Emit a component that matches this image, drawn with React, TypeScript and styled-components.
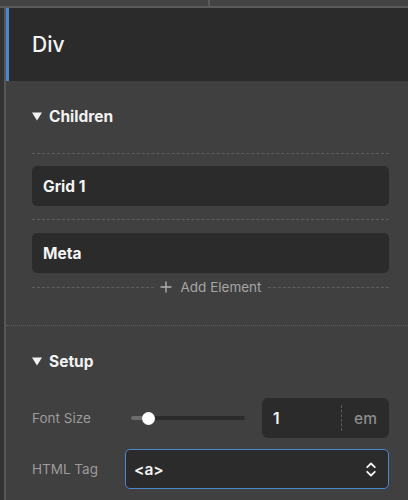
import React from "react";
import styled, { createGlobalStyle } from "styled-components";

const Global = createGlobalStyle`
  html, body { margin: 0; padding: 0; background: #404040; }
  body { font-family: Inter, "Noto Sans", "Liberation Sans", sans-serif; -webkit-font-smoothing: antialiased; }
  * { box-sizing: border-box; }
`;

const Page = styled.div`
  width: 408px;
  height: 500px;
  overflow: hidden;
  display: flex;
  flex-direction: column;
  background: #404040;
`;

const TopStrip = styled.div`
  height: 8px;
  display: grid;
  grid-template-columns: 210px 1fr;
  border-bottom: 2px solid #5a5a5a;
  background: #434343;
`;

const TopCell = styled.div<{ $divider?: boolean }>`
  border-right: ${(p) => (p.$divider ? "2px solid #5a5a5a" : "none")};
`;

const Main = styled.div`
  flex: 1;
  display: flex;
  min-height: 0;
`;

const Rail = styled.div`
  width: 6px;
  flex: none;
  background: #333333;
  border-right: 2px solid #575757;
`;

const Panel = styled.div`
  flex: 1;
  display: flex;
  flex-direction: column;
  min-width: 0;
`;

const Header = styled.div`
  height: 73px;
  background: #2b2b2b;
  border-left: 3px solid #4b86d3;
  display: flex;
  align-items: center;
  padding-left: 23px;
  color: #f4f4f4;
  font-size: 21px;
  font-weight: 500;
`;

const Section = styled.div<{ $divider?: boolean }>`
  padding: 25px 19px ${(p) => (p.$divider ? "30px" : "0")} 26px;
  border-bottom: ${(p) => (p.$divider ? "1px dotted #5c5c5c" : "none")};
  display: flex;
  flex-direction: column;
`;

const SectionTitle = styled.div`
  height: 20px;
  display: flex;
  align-items: center;
  gap: 7px;
  color: #f2f2f2;
  font-size: 15.5px;
  font-weight: 700;
`;

const Dashed = styled.div<{ $mt: number }>`
  margin-top: ${(p) => p.$mt}px;
  border-top: 1px dashed #5e5e5e;
`;

const ChildBox = styled.div<{ $mt: number }>`
  margin-top: ${(p) => p.$mt}px;
  height: 40px;
  border-radius: 5px;
  background: #2b2b2b;
  display: flex;
  align-items: center;
  padding-left: 11px;
  color: #f4f4f4;
  font-size: 15.5px;
  font-weight: 700;
`;

const AddRow = styled.div`
  margin-top: 6px;
  height: 16px;
  display: flex;
  align-items: center;
  gap: 6px;
`;

const AddLine = styled.div`
  flex: 1;
  border-top: 1px dashed #5e5e5e;
`;

const AddLabel = styled.div`
  display: flex;
  align-items: center;
  gap: 9px;
  color: #a6a6a6;
  font-size: 13.5px;
  font-weight: 400;
`;

const FieldRow = styled.div<{ $mt: number }>`
  margin-top: ${(p) => p.$mt}px;
  display: grid;
  grid-template-columns: 93px 1fr;
  align-items: center;
`;

const FieldLabel = styled.div`
  color: #9c9c9c;
  font-size: 13.5px;
  font-weight: 400;
`;

const Pair = styled.div`
  display: grid;
  grid-template-columns: 1fr 127px;
  gap: 11px;
  align-items: center;
`;

const SliderWrap = styled.div`
  position: relative;
  height: 40px;
  padding: 0 6px;
  display: flex;
  align-items: center;
`;

const Track = styled.div`
  position: relative;
  flex: 1;
  height: 4px;
  border-radius: 2px;
  background: #2b2b2b;
`;

const Fill = styled.div`
  position: absolute;
  left: 0;
  top: 0;
  bottom: 0;
  border-radius: 2px;
  background: #6c6c6c;
`;

const Thumb = styled.div`
  position: absolute;
  top: 50%;
  width: 13px;
  height: 13px;
  margin: -6.5px 0 0 -6.5px;
  border-radius: 50%;
  background: #ffffff;
`;

const NumberBox = styled.div`
  height: 40px;
  border-radius: 6px;
  background: #2b2b2b;
  display: flex;
  align-items: center;
`;

const NumberValue = styled.div`
  flex: 1;
  padding-left: 11px;
  color: #f4f4f4;
  font-size: 15.5px;
  font-weight: 600;
`;

const UnitSep = styled.div`
  width: 0;
  height: 26px;
  border-left: 1px dashed #5a5a5a;
`;

const Unit = styled.div`
  width: 47px;
  text-align: center;
  color: #8c8c8c;
  font-size: 15.5px;
  font-weight: 500;
`;

const Select = styled.div`
  height: 40px;
  border-radius: 5px;
  background: #2b2b2b;
  border: 1.5px solid #4b86d3;
  display: flex;
  align-items: center;
  justify-content: space-between;
  padding: 0 12px 0 8px;
  color: #f4f4f4;
  font-size: 15.5px;
  font-weight: 600;
`;

const Caret = () => (
  <svg width="10" height="9" viewBox="0 0 10 9">
    <polygon points="0,0.5 10,0.5 5,8.5" fill="#f2f2f2" />
  </svg>
);

const Plus = () => (
  <svg width="12" height="12" viewBox="0 0 12 12">
    <path d="M6 0.5V11.5M0.5 6H11.5" stroke="#b0b0b0" strokeWidth="1.4" />
  </svg>
);

const UpDown = () => (
  <svg width="10" height="15" viewBox="0 0 10 15">
    <path d="M1.2 5.2L5 1.5L8.8 5.2M1.2 9.8L5 13.5L8.8 9.8" stroke="#f2f2f2" strokeWidth="1.8" fill="none" strokeLinecap="round" strokeLinejoin="round" />
  </svg>
);

const Slider = ({ value }: { value: number }) => (
  <SliderWrap>
    <Track>
      <Fill style={{ width: `${value * 100}%` }} />
      <Thumb style={{ left: `${value * 100}%` }} />
    </Track>
  </SliderWrap>
);

export default function App() {
  return (
    <Page>
      <Global />
      <TopStrip>
        <TopCell $divider />
        <TopCell />
      </TopStrip>
      <Main>
        <Rail />
        <Panel>
          <Header>Div</Header>
          <Section $divider>
            <SectionTitle>
              <Caret />
              Children
            </SectionTitle>
            <Dashed $mt={27} />
            <ChildBox $mt={12}>Grid 1</ChildBox>
            <Dashed $mt={13} />
            <ChildBox $mt={13}>Meta</ChildBox>
            <AddRow>
              <AddLine />
              <AddLabel>
                <Plus />
                Add Element
              </AddLabel>
              <AddLine />
            </AddRow>
          </Section>
          <Section>
            <SectionTitle>
              <Caret />
              Setup
            </SectionTitle>
            <FieldRow $mt={27}>
              <FieldLabel>Font Size</FieldLabel>
              <Pair>
                <Slider value={0.15} />
                <NumberBox>
                  <NumberValue>1</NumberValue>
                  <UnitSep />
                  <Unit>em</Unit>
                </NumberBox>
              </Pair>
            </FieldRow>
            <FieldRow $mt={11}>
              <FieldLabel>HTML Tag</FieldLabel>
              <Select>
                <span>&lt;a&gt;</span>
                <UpDown />
              </Select>
            </FieldRow>
          </Section>
        </Panel>
      </Main>
    </Page>
  );
}
